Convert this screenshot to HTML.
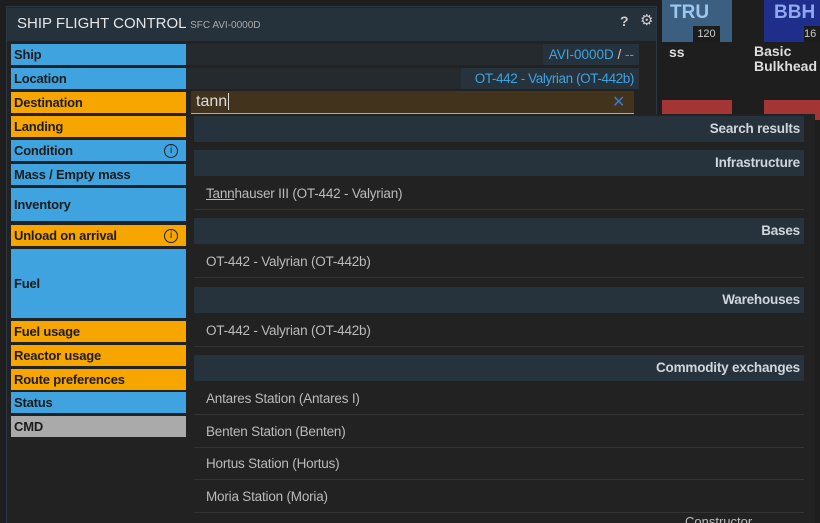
<!DOCTYPE html><html><head><style>
*{margin:0;padding:0;box-sizing:border-box}
html,body{width:820px;height:523px;overflow:hidden}
body{background:#1e1e1e;position:relative;font-family:"Liberation Sans","DejaVu Sans",sans-serif}
.a{position:absolute}
.win{left:6px;top:6px;width:651px;height:517px;background:#222;border:1px solid #2b3845;border-bottom:none}
.hdr{left:7px;top:8px;width:649px;height:33px;background:#25313b}
.lab{position:absolute;left:11px;width:175px;color:#1c1c1c;font-weight:bold;font-size:13px;padding-left:3px;display:flex;align-items:center;letter-spacing:-0.2px}
.b{background:#3fa3df}.o{background:#f7a600}.g{background:#aaa}
.ic{position:absolute;right:8px;width:14px;height:14px;border:1.3px solid #222;border-radius:50%;font-size:10px;text-align:center;line-height:12px;font-weight:normal}
.sh{position:absolute;left:194px;width:610px;height:26px;background:#26323c;color:#cfd6dc;font-size:13.5px;font-weight:bold;text-align:right;padding-right:4px;line-height:26px;letter-spacing:-0.2px}
.it{position:absolute;left:194px;width:610px;height:32px;border-bottom:1px solid #333;color:#bbb;font-size:13.5px;padding-left:12px;line-height:32px;letter-spacing:-0.2px}
</style></head><body>
<div class="a" style="left:662px;top:0;width:70px;height:42px;background:#3a5f80"></div>
<div class="a" style="left:670px;top:2px;color:#9cc8ef;font-size:19px;font-weight:bold">TRU</div>
<div class="a" style="left:693px;top:26px;width:27px;height:16px;background:#1c1c1c;color:#ccc;font-size:11px;text-align:center;line-height:16px">120</div>
<div class="a" style="left:764px;top:0;width:56px;height:42px;background:#1e2e8a"></div>
<div class="a" style="left:774px;top:2px;color:#8ea8f0;font-size:19px;font-weight:bold">BBH</div>
<div class="a" style="left:804px;top:26px;width:16px;height:16px;background:#1c1c1c;color:#ccc;font-size:11px;line-height:16px">16</div>
<div class="a" style="left:669px;top:44px;color:#ddd;font-size:14px;font-weight:bold">ss</div>
<div class="a" style="left:754px;top:44px;color:#ddd;font-size:14px;font-weight:bold;line-height:15px">Basic<br>Bulkhead</div>
<div class="a" style="left:662px;top:100px;width:70px;height:20px;background:#a33535"></div>
<div class="a" style="left:764px;top:100px;width:56px;height:20px;background:#a33535"></div>
<div class="a win"></div>
<div class="a hdr"></div>
<div class="a" style="left:17px;top:15px;color:#e6e6e6;font-size:15px">SHIP FLIGHT CONTROL <span style="font-size:10px;color:#aaa">SFC AVI-0000D</span></div>
<div class="a" style="left:620px;top:13px;color:#ccc;font-size:14px;font-weight:bold">?</div>
<div class="a" style="left:640px;top:11px;color:#ccc;font-size:15px">⚙</div>
<div class="lab b" style="top:44px;height:21px">Ship</div>
<div class="lab b" style="top:68px;height:21px">Location</div>
<div class="lab o" style="top:92px;height:21px">Destination</div>
<div class="lab o" style="top:116px;height:21px">Landing</div>
<div class="lab b" style="top:140px;height:21px">Condition<span class="ic">i</span></div>
<div class="lab b" style="top:164px;height:21px">Mass / Empty mass</div>
<div class="lab b" style="top:188px;height:33px">Inventory</div>
<div class="lab o" style="top:225px;height:21px">Unload on arrival<span class="ic">i</span></div>
<div class="lab b" style="top:249px;height:69px">Fuel</div>
<div class="lab o" style="top:321px;height:21px">Fuel usage</div>
<div class="lab o" style="top:345px;height:21px">Reactor usage</div>
<div class="lab o" style="top:369px;height:21px">Route preferences</div>
<div class="lab b" style="top:392px;height:21px">Status</div>
<div class="lab g" style="top:416px;height:21px">CMD</div>
<div class="a" style="left:186px;top:44px;width:453px;height:21px;background:#252a2f"></div>
<div class="a" style="left:186px;top:68px;width:453px;height:21px;background:#252a2f"></div>
<div class="a" style="left:543px;top:44px;width:96px;height:21px;background:#26323c;color:#3fa3df;font-size:13.5px;line-height:21px;text-align:right;padding-right:5px;white-space:nowrap">AVI-0000D <span style="color:#ccc">/</span> --</div>
<div class="a" style="left:461px;top:68px;width:178px;height:21px;background:#26323c;color:#3fa3df;font-size:13.5px;line-height:21px;text-align:right;padding-right:5px;white-space:nowrap;letter-spacing:-0.4px">OT-442 - Valyrian (OT-442b)</div>
<div class="a" style="left:191px;top:91px;width:443px;height:23px;background:#42331c;border-bottom:1px solid #f7a600;color:#ddd;font-size:16px;padding-left:5px;line-height:21px">tann<span style="border-left:1px solid #ddd;margin-left:1px"></span></div>
<div class="a" style="left:612px;top:92px;color:#3a78c8;font-size:16px;font-weight:bold">✕</div>
<div class="a" style="left:191px;top:114px;width:624px;height:409px;background:#222"></div>
<div class="sh" style="top:116px">Search results</div>
<div class="sh" style="top:150px">Infrastructure</div>
<div class="it" style="top:178px"><u>Tann</u>hauser III (OT-442 - Valyrian)</div>
<div class="sh" style="top:218px">Bases</div>
<div class="it" style="top:246px">OT-442 - Valyrian (OT-442b)</div>
<div class="sh" style="top:287px">Warehouses</div>
<div class="it" style="top:315px">OT-442 - Valyrian (OT-442b)</div>
<div class="sh" style="top:355px">Commodity exchanges</div>
<div class="it" style="top:383px">Antares Station (Antares I)</div>
<div class="it" style="top:416px">Benten Station (Benten)</div>
<div class="it" style="top:448px">Hortus Station (Hortus)</div>
<div class="it" style="top:481px">Moria Station (Moria)</div>
<div class="a" style="left:685px;top:514px;color:#bbb;font-size:13px">Constructor</div>
</body></html>
